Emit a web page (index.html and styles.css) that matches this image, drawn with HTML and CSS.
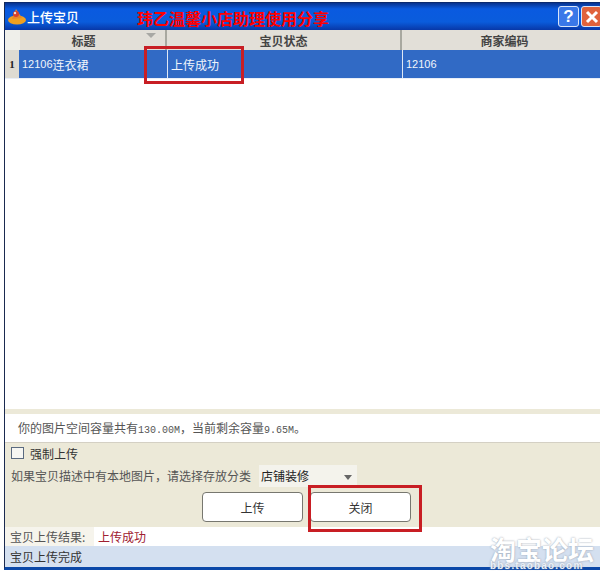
FILE: index.html
```html
<!DOCTYPE html>
<html lang="zh">
<head>
<meta charset="utf-8">
<title>上传宝贝</title>
<link rel="stylesheet" href="styles.css">
</head>
<body>
<div class="window">
  <div class="titlebar">
    <svg class="app-icon" width="20" height="20" viewBox="0 0 20 20">
      <ellipse cx="10" cy="14" rx="9" ry="4.5" fill="#f0a020"/>
      <path d="M5 13 L9 3 L15 12 Z" fill="#e8862a"/>
      <circle cx="9" cy="8" r="3" fill="#d8402c"/>
      <circle cx="8" cy="7" r="1.2" fill="#f4e0d0"/>
    </svg>
    <span class="title">上传宝贝</span>
    <span class="slogan">玮乙温馨小店助理使用分享</span>
    <span class="win-btn help">?</span>
    <span class="win-btn close">
      <svg width="14" height="14" viewBox="0 0 14 14"><path d="M2 2 L12 12 M12 2 L2 12" stroke="#fff" stroke-width="3"/></svg>
    </span>
  </div>
  <div class="grid">
    <div class="grid-head">
      <div class="corner"></div>
      <div class="hcell c-title"><span class="hlabel">标题</span><span class="sort"></span></div>
      <div class="hcell c-state">宝贝状态</div>
      <div class="hcell c-code">商家编码</div>
    </div>
    <div class="grid-row">
      <div class="rownum">1</div>
      <div class="cell c-title"><span class="num">12106</span>连衣裙</div>
      <div class="cell c-state">上传成功</div>
      <div class="cell c-code"><span class="num">12106</span></div>
    </div>
  </div>
  <div class="spacer"></div>
  <div class="info"><span>你的图片空间容量共有<span class="mono">130.00M</span>，当前剩余容量<span class="mono">9.65M</span>。</span></div>
  <div class="form">
    <label class="force"><span class="checkbox"></span>强制上传</label>
    <div class="category">
      <span>如果宝贝描述中有本地图片，请选择存放分类</span>
      <span class="select">店铺装修<span class="arrow"></span></span>
    </div>
    <div class="buttons">
      <button class="btn">上传</button>
      <button class="btn">关闭</button>
    </div>
  </div>
  <div class="result"><span class="result-label">宝贝上传结果:</span><span class="result-value">上传成功</span></div>
  <div class="status">宝贝上传完成</div>
</div>
<div class="mark mark-state"></div>
<div class="mark mark-close"></div>
<div class="watermark"><div class="wm-cn">淘宝论坛</div><div class="wm-en">bbs.taobao.com</div></div>
</body>
</html>
```
FILE: styles.css
```css
* { box-sizing: border-box; }
html, body { margin: 0; height: 572px; overflow: hidden; background: #fff; }
body { position: relative; padding: 2px 0 2px 4px; font-family: "Noto Sans CJK SC", "Liberation Sans", sans-serif; font-size: 12px; color: #333; }
.window { width: 600px; height: 568px; display: flex; flex-direction: column; border-left: 1px solid #1a2a50; border-bottom: 3px solid #0b48a8; background: #ece9d8; }
.titlebar { height: 28px; flex: none; display: flex; align-items: center; padding-left: 2px; color: #fff; background: linear-gradient(#08338f 0, #0a5ae0 22%, #0a5cdc 70%, #0838a8 100%); border-top: 1px solid #0a2a70; }
.app-icon { flex: none; margin-top: -2px; }
.title { margin-left: 0; font-size: 13px; font-weight: 500; width: 111px; }
.slogan { color: #f00; font-size: 16px; font-weight: 700; width: 425px; margin-top: 2px; white-space: nowrap; }
.win-btn { flex: none; width: 21px; height: 21px; margin-right: 2px; border: 1px solid #d8e4f8; border-radius: 3px; display: flex; align-items: center; justify-content: center; font: 700 17px "Liberation Sans", sans-serif; color: #fff; }
.help { background: #3a78e8; }
.close { background: #e0623c; }
.grid { flex: none; background: #fff; }
.grid-head { display: flex; height: 20px; background: #e2dfd8; font-weight: 700; color: #444; }
.corner { width: 15px; flex: none; background: #efefea; }
.hcell { display: flex; align-items: center; justify-content: center; border-right: 2px solid #a8a8a0; position: relative; }
.hlabel { margin-right: 18px; }
.c-title { width: 147px; flex: none; }
.c-state { width: 235px; flex: none; }
.c-code { width: 205px; flex: none; border-right: 0; }
.sort { position: absolute; right: 9px; top: 3px; border: 5px solid transparent; border-top: 5px solid #a8a8a4; }
.grid-row { display: flex; height: 29px; background: #316ac5; color: #f0f4fb; border-bottom: 1px solid #e8eef8; }
.rownum { width: 14px; flex: none; background: #dedbd2; color: #222; font: 700 11px "Liberation Serif", serif; display: flex; align-items: center; justify-content: center; }
.cell { display: flex; align-items: center; padding-left: 3px; }
.num { font: 11px "Liberation Sans", sans-serif; }
.mono { font: 10px "Liberation Mono", monospace; }
.grid-row .c-title { width: 148px; }
.grid-row .c-state { width: 235px; border-left: 1px solid #dfe8f5; }
.grid-row .c-code { border-left: 1px solid #dfe8f5; }
.spacer { flex: 1; background: #fff; }
.info { flex: none; height: 34px; padding: 0 0 1px 13px; display: flex; align-items: center; background: #fff; border-top: 5px solid #ece9d8; border-bottom: 1px solid #d4d0c4; font-size: 12px; color: #555; }
.form { flex: none; height: 84px; padding: 0 0 0 6px; display: flex; flex-direction: column; color: #555; }
.force { display: flex; align-items: center; height: 20px; color: #333; }
.checkbox { width: 13px; height: 12px; margin-right: 6px; background: #f6f6f2; border: 1px solid #5a6a80; }
.category { display: flex; align-items: center; height: 25px; }
.select { position: relative; width: 98px; height: 22px; margin-left: 8px; padding-left: 2px; display: flex; align-items: center; background: #f4f3ec; color: #222; }
.arrow { position: absolute; right: 5px; top: 10px; border: 4px solid transparent; border-top: 5px solid #666; }
.buttons { display: flex; gap: 7px; margin: 4px 0 0 191px; }
.btn { width: 101px; height: 30px; padding: 0; background: #fff; border: 1px solid #77776f; border-radius: 4px; font: 12px "Noto Sans CJK SC", sans-serif; color: #333; }
.result { flex: none; height: 19px; display: flex; align-items: center; color: #555; }
.result-label { width: 89px; height: 19px; padding-left: 5px; background: #f6f4ec; display: flex; align-items: center; }
.result-value { flex: 1; height: 19px; padding-left: 4px; background: #fff; color: #a02030; display: flex; align-items: center; }
.status { flex: none; height: 21px; padding-left: 5px; display: flex; align-items: center; background: #d4e0f0; color: #333; }
.mark { position: absolute; border: 3px solid #c81e24; }
.mark-state { left: 144px; top: 46px; width: 100px; height: 38px; }
.mark-close { left: 308px; top: 485px; width: 114px; height: 47px; }
.watermark { position: absolute; left: 490px; top: 537px; color: #fff; width: 110px; height: 35px; text-shadow: 0 0 2px #8f99a8; }
.wm-cn { font-size: 26px; font-weight: 700; line-height: 23px; white-space: nowrap; }
.wm-en { font: 700 10px/11px "Liberation Sans", sans-serif; letter-spacing: 1.2px; white-space: nowrap; color: #eaf0f8; }
```
